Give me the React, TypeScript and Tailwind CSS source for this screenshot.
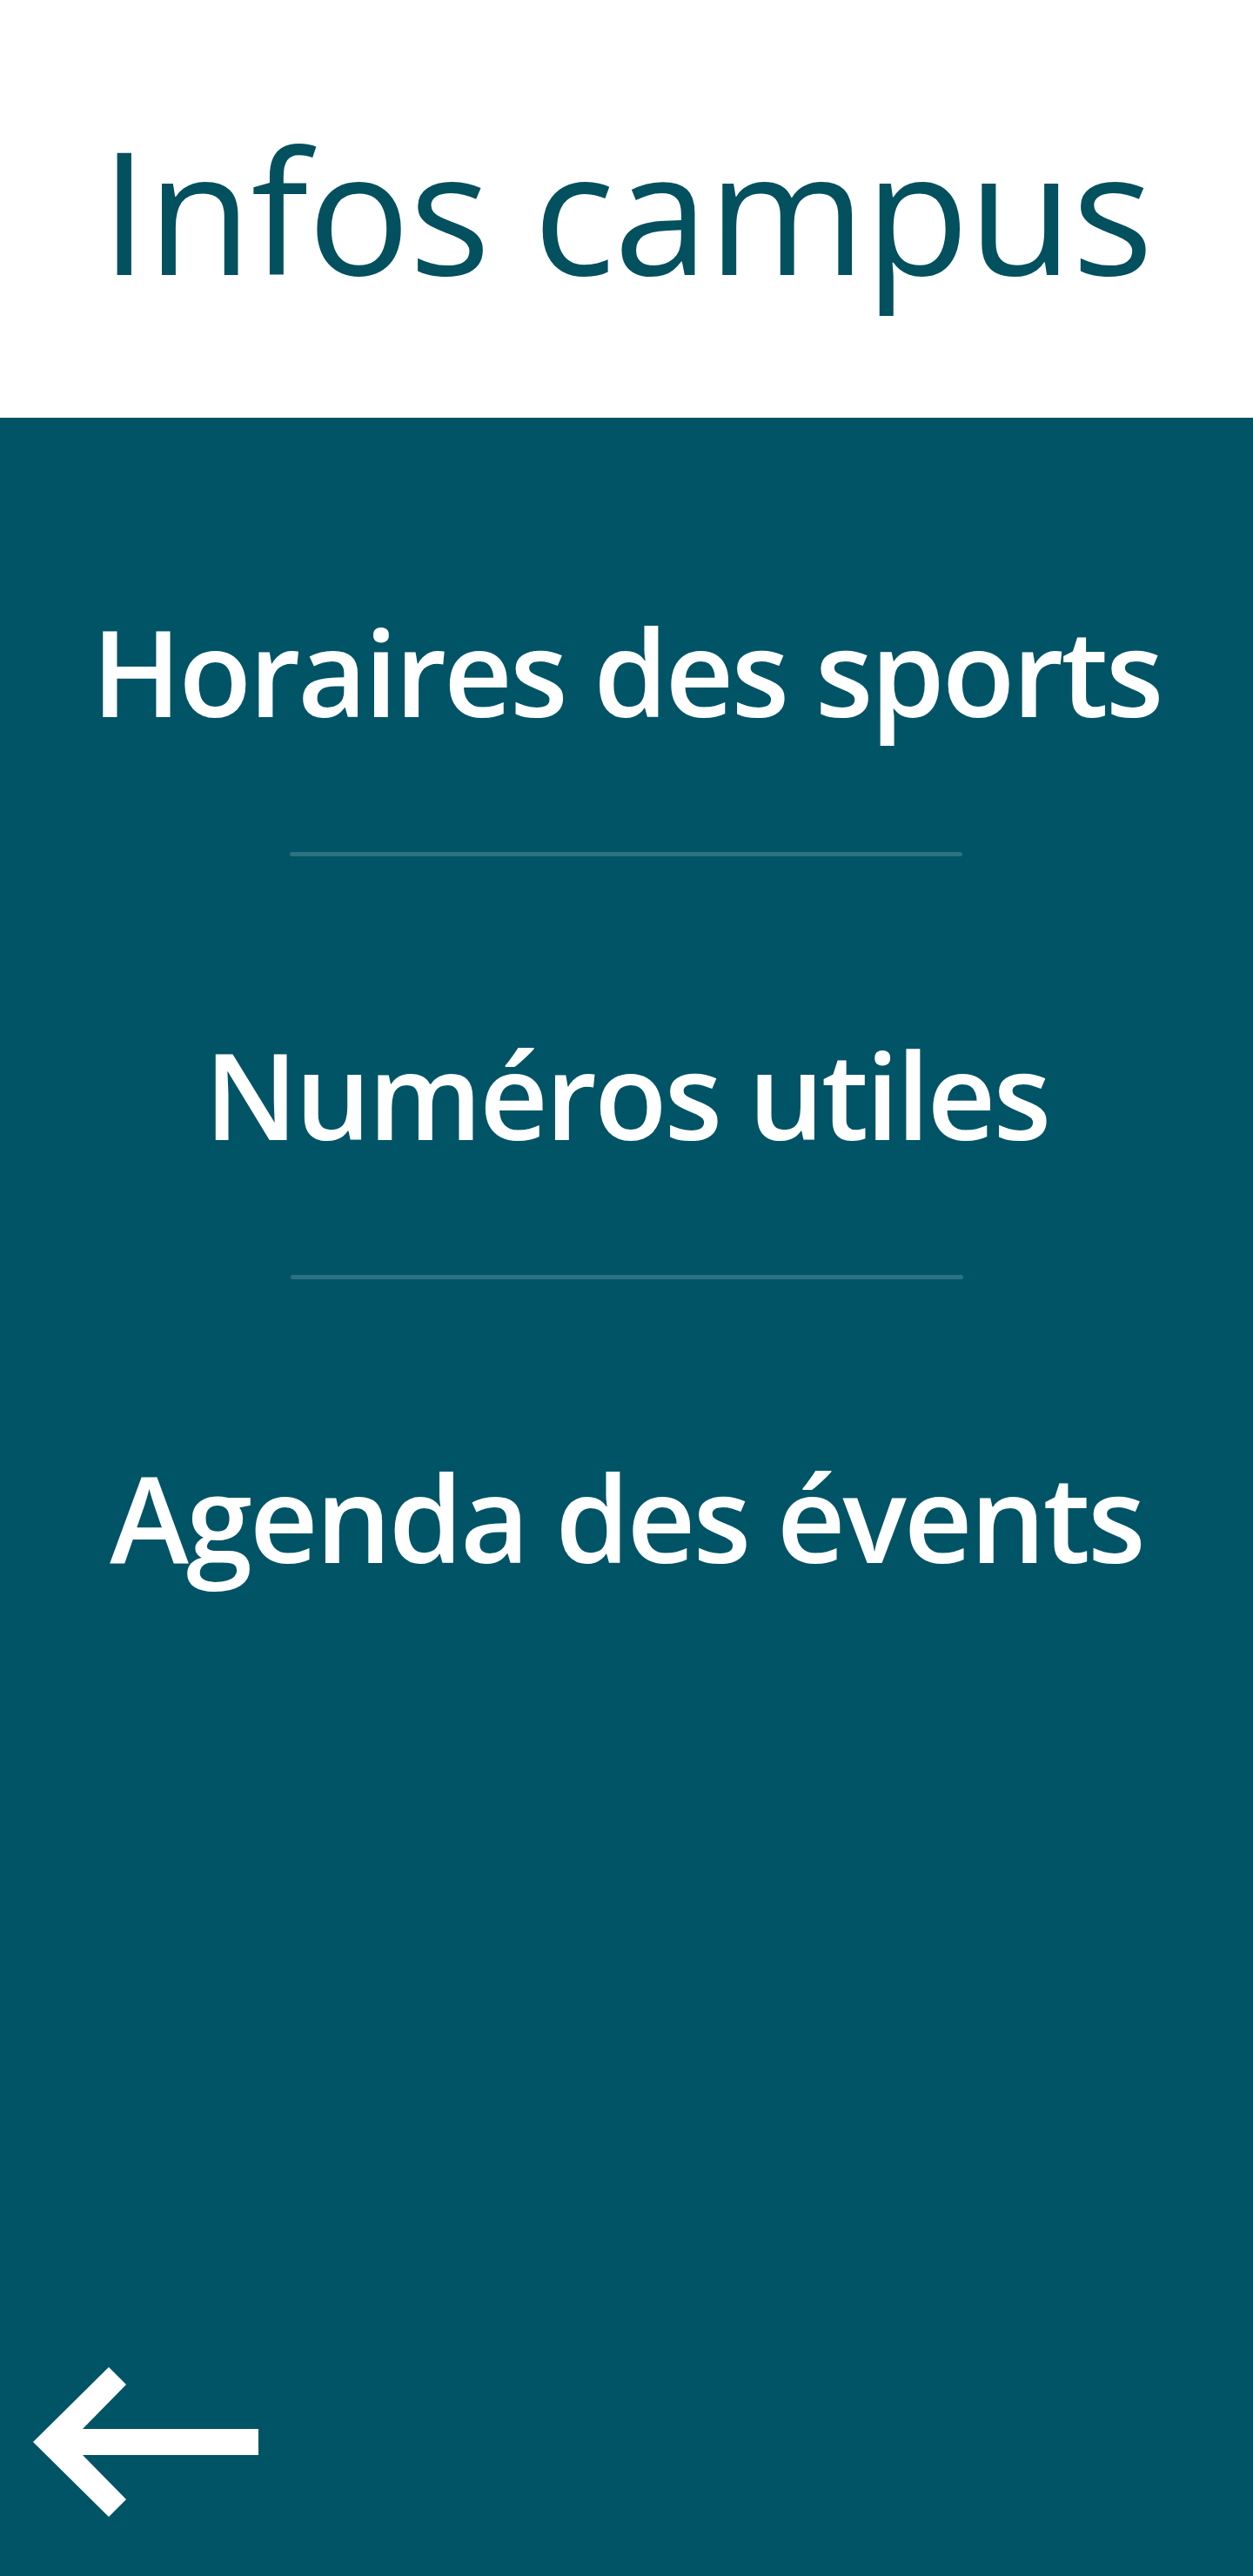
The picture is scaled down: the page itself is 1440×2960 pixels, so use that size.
const items = ['Horaires des sports', 'Numéros utiles', 'Agenda des évents'];

function BackArrow() {
  return (
    <svg width="260" height="172" viewBox="0 0 260 172" aria-hidden="true">
      <polygon
        fill="#ffffff"
        points="0,86 87,0 107,20 57,71 259,71 259,101 57,101 107,152 87,172"
      />
    </svg>
  );
}

export default function App() {
  return (
    <div className="flex min-h-[2960px] w-[1440px] flex-col font-['Open_Sans',sans-serif]">
      {/* Header */}
      <header className="flex h-[480px] items-center justify-center bg-white">
        <h1 className="text-[196px] leading-none font-medium tracking-[-1px] text-[#03505f]">
          Infos campus
        </h1>
      </header>

      {/* Menu */}
      <main className="flex flex-1 flex-col bg-[#015466]">
        <nav className="flex flex-col items-center pt-[223px]">
          {items.map((label, i) => (
            <div key={label} className="flex flex-col items-center">
              <a
                href="#"
                className="text-[137px] leading-none font-semibold tracking-[-3px] text-white"
              >
                {label}
              </a>
              {i < items.length - 1 && (
                <div className="mt-[139px] mb-[205px] h-[5px] w-[773px] rounded-full bg-[#2c7280]" />
              )}
            </div>
          ))}
        </nav>

        <div className="mt-auto pb-[62px] pl-[38px]">
          <button type="button" aria-label="Retour">
            <BackArrow />
          </button>
        </div>
      </main>
    </div>
  );
}
